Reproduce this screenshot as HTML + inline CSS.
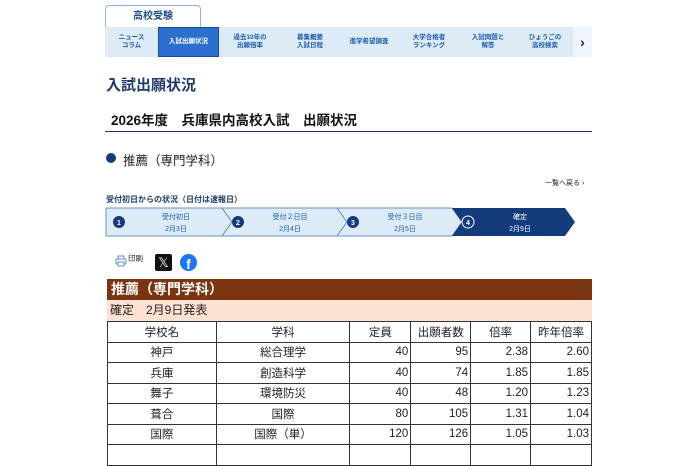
<!DOCTYPE html>
<html><head><meta charset="utf-8"><style>
*{margin:0;padding:0;box-sizing:border-box}
body{width:700px;height:450px;overflow:hidden;background:#fff;font-family:"Liberation Sans","Noto Sans CJK JP",sans-serif;color:#222;position:relative}
.a{position:absolute}
.tab{left:105px;top:5px;width:96px;height:23px;border:1px solid #8fb5e0;border-bottom:none;border-radius:4px 4px 0 0;background:#fff;font-size:10px;color:#1d4a8a;text-align:center;line-height:22px;font-weight:bold}
.nav{left:105px;top:27px;width:487px;height:30px;background:#dcebf6;display:flex}
.nav div{font-size:6.5px;color:#1d5cb0;text-align:center;display:flex;align-items:center;justify-content:center;line-height:8px;font-weight:bold}
.nav .on{background:#2c6fd0;color:#fff;border:1px solid #1d4a8a}
table{border-collapse:collapse;font-size:11.5px}
td{border:1px solid #333;height:20.5px;padding:0 2px}
.c{text-align:center}.r{text-align:right}
</style></head><body>
<div class="a tab">高校受験</div>
<div class="a nav">
<div style="width:53px">ニュース<br>コラム</div>
<div class="on" style="width:61px">入試出願状況</div>
<div style="width:62px">過去10年の<br>出願倍率</div>
<div style="width:58px">募集概要<br>入試日程</div>
<div style="width:60px">進学希望調査</div>
<div style="width:60px">大学合格者<br>ランキング</div>
<div style="width:58px">入試問題と<br>解答</div>
<div style="width:56px">ひょうごの<br>高校検索</div>
<div style="width:19px;background:#eef5fb;color:#222;font-size:14px">›</div>
</div>
<div class="a" style="left:106px;top:74px;font-size:15px;font-weight:bold;color:#1d3a6a">入試出願状況</div>
<div class="a" style="left:111px;top:109px;font-size:13.5px;color:#111;font-weight:bold">2026年度　兵庫県内高校入試　出願状況</div>
<div class="a" style="left:105px;top:131px;width:487px;height:1px;background:#1d3a6a"></div>
<div class="a" style="left:106px;top:153px;width:10px;height:10px;border-radius:50%;background:#143c7d"></div>
<div class="a" style="left:123px;top:150px;font-size:12.5px">推薦（専門学科）</div>
<div class="a" style="left:545px;top:178px;font-size:7px">一覧へ戻る ›</div>
<div class="a" style="left:106px;top:194px;font-size:8px;font-weight:bold;color:#1d3a6a">受付初日からの状況（日付は速報日）</div>
<svg class="a" style="left:105px;top:207px" width="470" height="31">
<path d="M1 1H117L127 15L117 29H1Z" fill="#dcebf6" stroke="#6d8fc0"/>
<path d="M117 1H232L242 15L232 29H117L127 15Z" fill="#dcebf6" stroke="#6d8fc0"/>
<path d="M232 1H347L357 15L347 29H232L242 15Z" fill="#dcebf6" stroke="#6d8fc0"/>
<path d="M347 1H460L470 15L460 29H347L357 15Z" fill="#143c7d"/>
<circle cx="14" cy="15" r="6" fill="#143c7d"/><circle cx="133" cy="15" r="6" fill="#143c7d"/><circle cx="248" cy="15" r="6" fill="#143c7d"/><circle cx="363" cy="15" r="6" fill="none" stroke="#fff"/>
<g font-size="7" font-weight="bold" fill="#fff" text-anchor="middle"><text x="14" y="18">1</text><text x="133" y="18">2</text><text x="248" y="18">3</text><text x="363" y="18">4</text></g>
<g font-size="7" fill="#1d5cb0" text-anchor="middle"><text x="71" y="12">受付初日</text><text x="71" y="24">2月3日</text><text x="185" y="12">受付２日目</text><text x="185" y="24">2月4日</text><text x="300" y="12">受付３日目</text><text x="300" y="24">2月5日</text></g>
<g font-size="7" fill="#fff" text-anchor="middle"><text x="415" y="12">確定</text><text x="415" y="24">2月9日</text></g>
</svg>
<svg class="a" style="left:115px;top:255px" width="12" height="12"><rect x="3" y="1" width="6" height="3" fill="none" stroke="#5c8fd0"/><rect x="1" y="4" width="10" height="5" rx="1" fill="none" stroke="#5c8fd0"/><rect x="3" y="7" width="6" height="4" fill="#fff" stroke="#5c8fd0"/></svg>
<div class="a" style="left:128px;top:253px;font-size:7.5px">印刷</div>
<div class="a" style="left:155px;top:254px;width:17px;height:17px;background:#111;border-radius:2px;color:#fff;font-size:13px;text-align:center;line-height:17px">𝕏</div>
<div class="a" style="left:180px;top:254px;width:17px;height:17px;background:#1877f2;border-radius:50%;color:#fff;font-size:14px;font-weight:bold;text-align:center;line-height:20px;overflow:hidden">f</div>
<div class="a" style="left:107px;top:279px;width:485px;height:21px;background:#7a3410;color:#fff;font-size:14px;font-weight:bold;padding-left:4px;line-height:21px">推薦（専門学科）</div>
<div class="a" style="left:107px;top:300px;width:485px;height:21px;background:#fde1d3;font-size:12px;padding-left:3px;line-height:21px">確定　2月9日発表</div>
<table class="a" style="left:107px;top:321px;width:485px">
<colgroup><col style="width:109px"><col style="width:134px"><col style="width:61px"><col style="width:60px"><col style="width:60px"><col style="width:61px"></colgroup>
<tr><td class="c">学校名</td><td class="c">学科</td><td class="c">定員</td><td class="c">出願者数</td><td class="c">倍率</td><td class="c">昨年倍率</td></tr>
<tr><td class="c">神戸</td><td class="c">総合理学</td><td class="r">40</td><td class="r">95</td><td class="r">2.38</td><td class="r">2.60</td></tr>
<tr><td class="c">兵庫</td><td class="c">創造科学</td><td class="r">40</td><td class="r">74</td><td class="r">1.85</td><td class="r">1.85</td></tr>
<tr><td class="c">舞子</td><td class="c">環境防災</td><td class="r">40</td><td class="r">48</td><td class="r">1.20</td><td class="r">1.23</td></tr>
<tr><td class="c">葺合</td><td class="c">国際</td><td class="r">80</td><td class="r">105</td><td class="r">1.31</td><td class="r">1.04</td></tr>
<tr><td class="c">国際</td><td class="c">国際（単）</td><td class="r">120</td><td class="r">126</td><td class="r">1.05</td><td class="r">1.03</td></tr>
<tr><td></td><td></td><td></td><td></td><td></td><td></td></tr>
</table>
</body></html>
